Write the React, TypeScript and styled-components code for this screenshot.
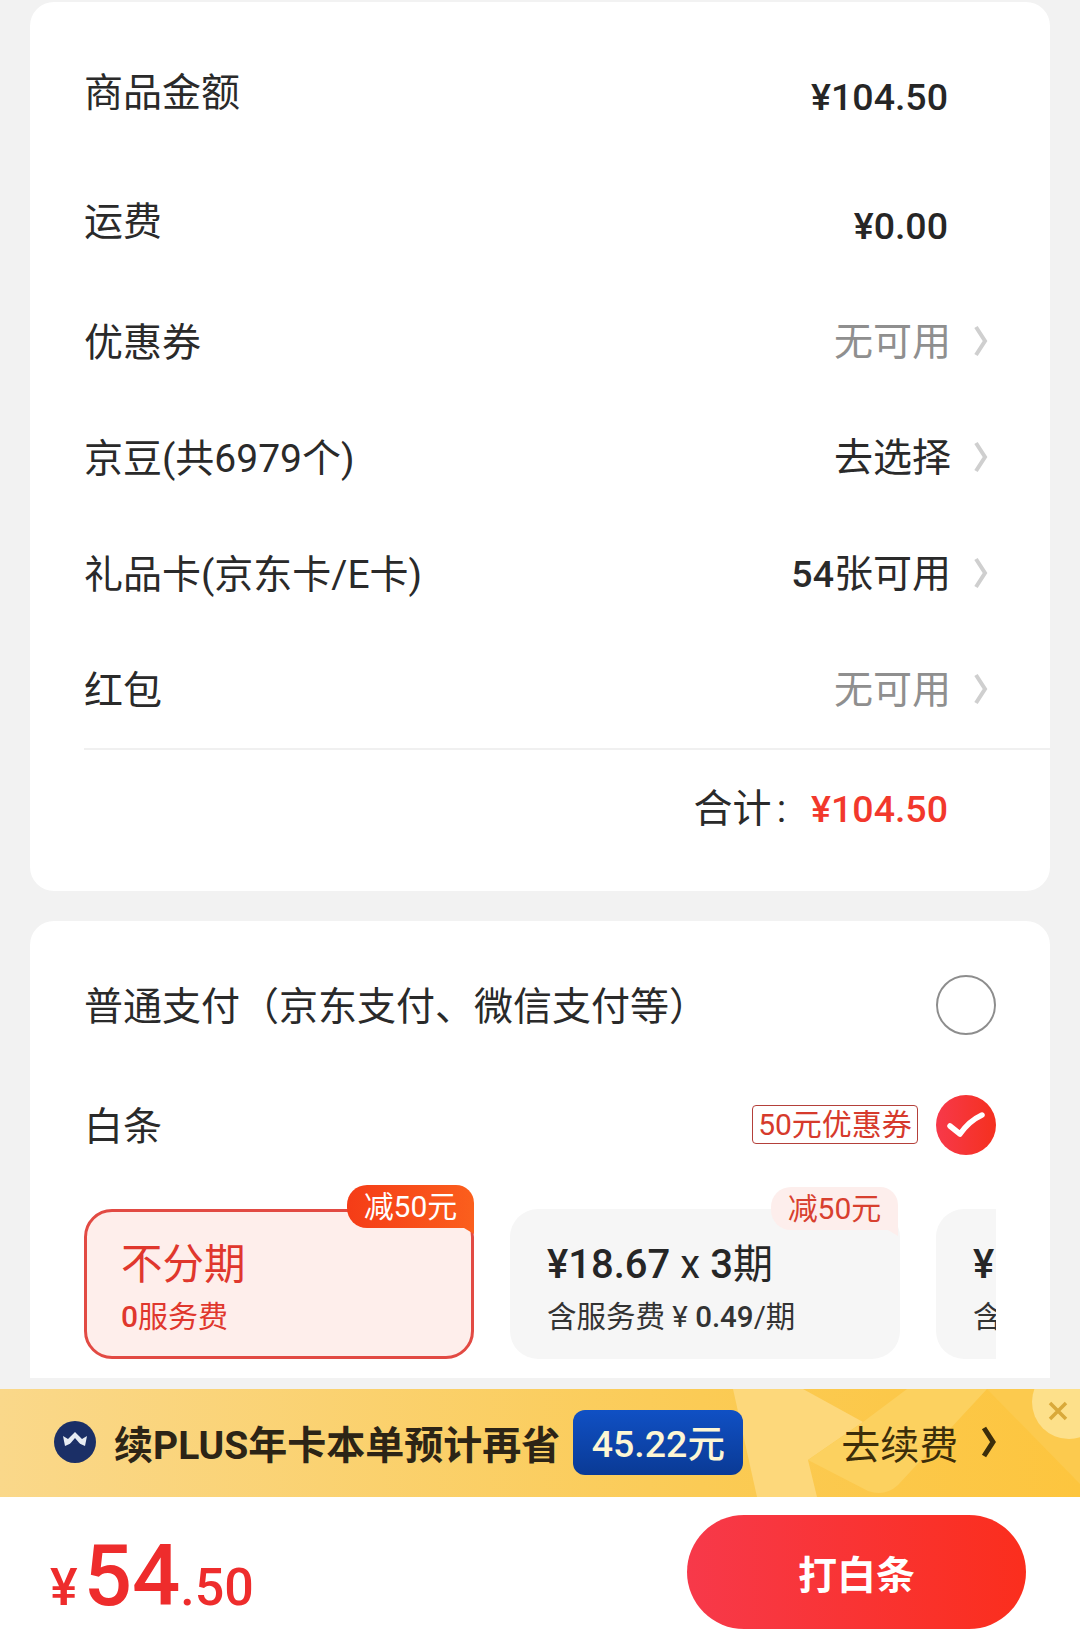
import React from "react";
import styled, { createGlobalStyle } from "styled-components";

const CJK = `Roboto, "Noto Sans CJK SC", sans-serif`;

const GlobalStyle = createGlobalStyle`
  html, body {
    margin: 0;
    padding: 0;
    background: #f2f2f2;
  }
  body {
    font-family: ${CJK};
    color: #262626;
  }
  * { box-sizing: border-box; }
`;

const Page = styled.div`
  width: 1080px;
  height: 1646px;
  display: flex;
  flex-direction: column;
  overflow: hidden;
  background: #f2f2f2;
`;

const Scroll = styled.div`
  height: 1378px;
  padding: 2px 30px 0;
  display: flex;
  flex-direction: column;
  gap: 30px;
  overflow: hidden;
  flex-shrink: 0;
`;

const SummaryCard = styled.section`
  height: 889px;
  background: #fff;
  border-radius: 24px;
  padding: 0 0 0 54px;
  flex-shrink: 0;
`;

const Row = styled.div<{ $h: number; $mt?: number }>`
  height: ${(p) => p.$h}px;
  margin-top: ${(p) => p.$mt ?? 0}px;
  display: flex;
  align-items: center;
  justify-content: space-between;
  padding-right: 62px;
`;

const Label = styled.span<{ $lift?: number }>`
  font-size: 39px;
  line-height: 50px;
  color: #2a2a2a;
  white-space: nowrap;
  margin-bottom: ${(p) => p.$lift ?? 0}px;
`;

const Amount = styled.span<{ $drop?: number }>`
  font-size: 37.5px;
  font-weight: 500;
  line-height: 50px;
  color: #262626;
  margin-right: 40px;
  margin-top: ${(p) => p.$drop ?? 0}px;
`;

const Side = styled.span`
  display: flex;
  align-items: center;
  gap: 23px;
`;

const Value = styled.span<{ $muted?: boolean }>`
  font-size: 39px;
  line-height: 50px;
  color: ${(p) => (p.$muted ? "#8f8f8f" : "#2a2a2a")};
  white-space: nowrap;
  margin-bottom: 2px;

  b {
    font-weight: 500;
    font-size: 37.5px;
  }
`;

const Chevron = styled.svg`
  margin-bottom: 4px;
`;

const Total = styled.div`
  border-top: 2px solid #f0f0f0;
  height: 118px;
  padding: 2px 102px 0 0;
  margin-top: 25px;
  display: flex;
  align-items: center;
  justify-content: flex-end;
  gap: 25px;
`;

const TotalColon = styled.span`
  margin-left: 5px;
`;

const TotalAmount = styled.span`
  font-size: 37.5px;
  font-weight: 500;
  color: #f2382c;
`;

const PayCard = styled.section`
  height: 480px;
  background: #fff;
  border-radius: 24px;
  padding: 54px 54px 0;
  flex-shrink: 0;
`;

const PayRow = styled.div`
  height: 60px;
  display: flex;
  align-items: center;
  justify-content: space-between;

  & + & {
    margin-top: 60px;
  }
`;

const PayLabel = styled(Label)`
  margin-top: 4px;
`;

const Right = styled.div`
  display: flex;
  align-items: center;
  gap: 18px;
`;

const Radio = styled.span`
  width: 60px;
  height: 60px;
  border-radius: 50%;
  border: 2px solid #8d8d8d;
`;

const Checked = styled.span`
  width: 60px;
  height: 60px;
  border-radius: 50%;
  background: linear-gradient(90deg, #f7394a, #f5301f);
  display: flex;
  align-items: center;
  justify-content: center;
`;

const Coupon = styled.span`
  height: 39px;
  width: 166px;
  margin-bottom: 2px;
  border: 1px solid #b4403a;
  border-radius: 4px;
  font-size: 30px;
  line-height: 37px;
  text-align: center;
  color: #d63a2c;
  white-space: nowrap;
`;

const Plans = styled.div`
  display: flex;
  gap: 36px;
  width: 912px;
  overflow: hidden;
  margin-top: 30px;
  padding-top: 24px;
`;

const Plan = styled.div<{ $active?: boolean }>`
  position: relative;
  width: 390px;
  height: 150px;
  flex-shrink: 0;
  border-radius: 28px;
  padding: ${(p) => (p.$active ? "27px 36px 0 34px" : "30px 37px 0 37px")};
  background: ${(p) => (p.$active ? "#feeeeb" : "#f6f6f6")};
  border: ${(p) => (p.$active ? "3px solid #e24a43" : "none")};
`;

const PlanTitle = styled.div<{ $active?: boolean }>`
  font-size: ${(p) => (p.$active ? "41.5px" : "40px")};
  font-weight: ${(p) => (p.$active ? 400 : 500)};
  line-height: 52px;
  color: ${(p) => (p.$active ? "#e0372d" : "#262626")};
  white-space: nowrap;

  i {
    font-style: normal;
    font-weight: 400;
    margin: 0 10px;
  }
  em {
    font-style: normal;
    font-weight: 400;
  }
`;

const PlanSub = styled.div<{ $active?: boolean }>`
  margin-top: 7px;
  font-size: ${(p) => (p.$active ? "30px" : "29.5px")};
  line-height: 38px;
  color: ${(p) => (p.$active ? "#e0372d" : "#333")};
  white-space: nowrap;

  b {
    font-weight: 500;
  }
`;

const Tag = styled.span<{ $active?: boolean }>`
  position: absolute;
  top: ${(p) => (p.$active ? "-27px" : "-22px")};
  right: ${(p) => (p.$active ? "-3px" : "2px")};
  width: 127px;
  height: 43px;
  border-radius: 20px 18px 0 20px;
  font-size: 30px;
  line-height: 43px;
  text-align: center;
  color: ${(p) => (p.$active ? "#fff" : "#d8402f")};
  background: ${(p) =>
    p.$active ? "linear-gradient(90deg, #f53c17, #fb5f1d)" : "#fdeeec"};

  &::after {
    content: "";
    position: absolute;
    right: 0;
    top: 100%;
    width: 10px;
    height: 6px;
    background: ${(p) => (p.$active ? "#fb5f1d" : "#fdeeec")};
    clip-path: polygon(0 0, 100% 0, 100% 100%);
  }
`;

const Banner = styled.div`
  position: relative;
  height: 108px;
  margin-top: 11px;
  flex-shrink: 0;
  padding: 0 0 2px 54px;
  display: flex;
  align-items: center;
  background: linear-gradient(90deg, #fad88a, #fbcb55 65%, #fdc53e);
  overflow: hidden;
`;

const Art = styled.svg`
  position: absolute;
  left: 0;
  top: 0;
`;

const Logo = styled.svg`
  position: relative;
  flex-shrink: 0;
  margin-right: 18px;
`;

const PlusText = styled.span`
  position: relative;
  font-size: 39px;
  font-weight: 700;
  color: #2c2416;
  white-space: nowrap;
`;

const Saving = styled.span`
  position: relative;
  margin-left: 13px;
  width: 170px;
  height: 65px;
  border-radius: 12px;
  background: linear-gradient(180deg, #1050c4, #0a3a95);
  color: #fdf6d4;
  font-size: 37.5px;
  font-weight: 500;
  line-height: 68px;
  text-align: center;
  white-space: nowrap;
`;

const Renew = styled.span`
  position: relative;
  margin-left: 98px;
  font-size: 39px;
  color: #3c2d0a;
  white-space: nowrap;
`;

const RenewArrow = styled.svg`
  position: relative;
  margin-left: 23px;
`;

const Close = styled.span`
  position: absolute;
  right: -26px;
  top: -24px;
  width: 74px;
  height: 74px;
  border-radius: 50%;
  background: #fde08a;
`;

const CloseIcon = styled.svg`
  position: absolute;
  right: 12px;
  top: 12px;
`;

const Footer = styled.div`
  flex: 1;
  background: #fff;
  padding: 18px 54px 0 50px;
  display: flex;
  justify-content: space-between;
  align-items: flex-start;
`;

const Price = styled.div`
  display: flex;
  align-items: baseline;
  color: #ee2c2c;
  font-weight: 500;
  height: 112px;
  line-height: 122px;
`;

const PriceSign = styled.span`
  font-size: 52px;
  margin-right: 6px;
`;

const PriceMain = styled.span`
  font-size: 85px;
`;

const PriceCents = styled.span`
  font-size: 52px;
`;

const PayButton = styled.button`
  width: 339px;
  height: 114px;
  border: none;
  border-radius: 57px;
  background: linear-gradient(90deg, #f7394a, #fb2e1d);
  color: #fff;
  font-family: ${CJK};
  font-size: 39px;
  font-weight: 700;
`;

function RowArrow() {
  return (
    <Chevron width="14" height="32" viewBox="0 0 14 32">
      <path d="M2 2 L11 16 L2 30" fill="none" stroke="#cfcfcf" strokeWidth="4" />
    </Chevron>
  );
}

const summaryRows = [
  { label: "优惠券", value: "无可用", muted: true, gap: 59 },
  { label: "京豆(共6979个)", value: "去选择", gap: 52 },
  { label: "礼品卡(京东卡/E卡)", value: "张可用", num: "54", gap: 52 },
  { label: "红包", value: "无可用", muted: true, gap: 52 },
];

export default function App() {
  return (
    <Page>
      <GlobalStyle />
      <Scroll>
        <SummaryCard>
          <Row $h={190}>
            <Label $lift={8}>商品金额</Label>
            <Amount>¥104.50</Amount>
          </Row>
          <Row $h={60}>
            <Label>运费</Label>
            <Amount $drop={8}>¥0.00</Amount>
          </Row>
          {summaryRows.map((r) => (
            <Row key={r.label} $h={64} $mt={r.gap}>
              <Label>{r.label}</Label>
              <Side>
                <Value $muted={r.muted}>
                  {r.num && <b>{r.num}</b>}
                  {r.value}
                </Value>
                <RowArrow />
              </Side>
            </Row>
          ))}
          <Total>
            <Label>
              合计<TotalColon>:</TotalColon>
            </Label>
            <TotalAmount>¥104.50</TotalAmount>
          </Total>
        </SummaryCard>
        <PayCard>
          <PayRow>
            <PayLabel>普通支付（京东支付、微信支付等）</PayLabel>
            <Radio />
          </PayRow>
          <PayRow>
            <PayLabel>白条</PayLabel>
            <Right>
              <Coupon>50元优惠券</Coupon>
              <Checked>
                <svg width="38" height="28" viewBox="0 0 38 28">
                  <path d="M3 15 L13 23 Q22 10 35 4" fill="none" stroke="#fff" strokeWidth="5.500" strokeLinecap="round" strokeLinejoin="round" />
                </svg>
              </Checked>
            </Right>
          </PayRow>
          <Plans>
            <Plan $active>
              <Tag $active>减50元</Tag>
              <PlanTitle $active>不分期</PlanTitle>
              <PlanSub $active>
                <b>0</b>服务费
              </PlanSub>
            </Plan>
            <Plan>
              <Tag>减50元</Tag>
              <PlanTitle>
                ¥18.67<i>x</i>3<em>期</em>
              </PlanTitle>
              <PlanSub>
                含服务费 ¥ <b>0.49</b>/期
              </PlanSub>
            </Plan>
            <Plan>
              <PlanTitle>¥</PlanTitle>
              <PlanSub>含</PlanSub>
            </Plan>
          </Plans>
        </PayCard>
      </Scroll>
      <Banner>
        <Art width="1080" height="108" viewBox="0 0 1080 108">
          <path d="M733 0 H803 L863 33 L808 71 L817 108 H757Z" fill="#fdd87b" />
          <path d="M863 33 L907 0 H987 L898 96 Q885 108 868 102 L808 71Z" fill="#fcd15f" />
          <path d="M987 0 L1080 95 V0Z" fill="#fcca4e" />
        </Art>
        <Logo width="42" height="42" viewBox="0 0 42 42">
          <circle cx="21" cy="21" r="21" fill="#1b2f66" />
          <path d="M9 15 L14 18 L21 11 L28 18 L33 15 L31 25 Q21 19 11 25Z" fill="#e6ebf2" />
          <path d="M15 24 L21 17 L27 24 Q21 21.500 15 24Z" fill="#1b2f66" />
        </Logo>
        <PlusText>续PLUS年卡本单预计再省</PlusText>
        <Saving>45.22元</Saving>
        <Renew>去续费</Renew>
        <RenewArrow width="15" height="32" viewBox="0 0 15 32">
          <path d="M3 2 L12 16 L3 30" fill="none" stroke="#3c2d0a" strokeWidth="5" />
        </RenewArrow>
        <Close />
        <CloseIcon width="20" height="20" viewBox="0 0 20 20">
          <path d="M2 2 L18 18 M18 2 L2 18" stroke="#d9a93a" strokeWidth="3.5" />
        </CloseIcon>
      </Banner>
      <Footer>
        <Price>
          <PriceSign>¥</PriceSign>
          <PriceMain>54</PriceMain>
          <PriceCents>.50</PriceCents>
        </Price>
        <PayButton>打白条</PayButton>
      </Footer>
    </Page>
  );
}
